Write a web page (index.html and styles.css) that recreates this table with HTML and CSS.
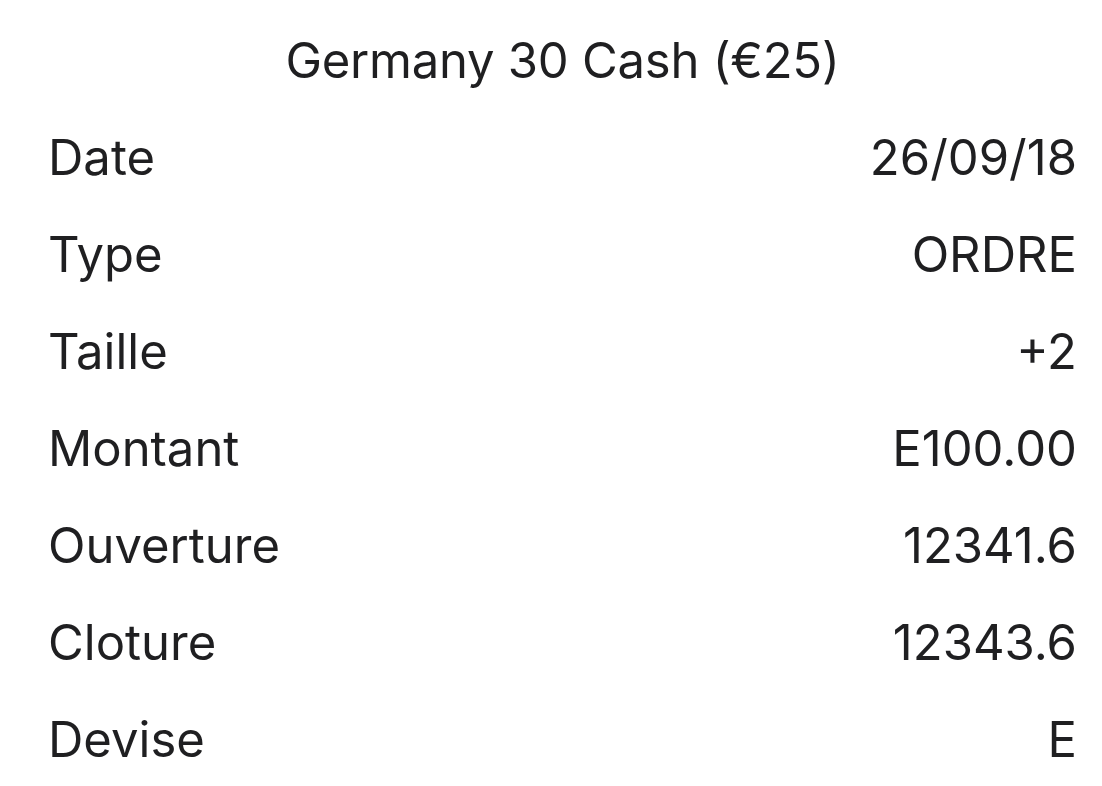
FILE: index.html
```html
<!DOCTYPE html>
<html lang="fr">
<head>
<meta charset="utf-8">
<title>Germany 30 Cash</title>
<link rel="stylesheet" href="styles.css">
</head>
<body>
<main class="sheet">
  <h1 class="title">Germany 30 Cash (€25)</h1>
  <ul class="rows">
    <li class="row"><span class="label">Date</span><span class="value">26/09/18</span></li>
    <li class="row"><span class="label">Type</span><span class="value">ORDRE</span></li>
    <li class="row"><span class="label">Taille</span><span class="value">+2</span></li>
    <li class="row"><span class="label">Montant</span><span class="value">E100.00</span></li>
    <li class="row"><span class="label">Ouverture</span><span class="value">12341.6</span></li>
    <li class="row"><span class="label">Cloture</span><span class="value">12343.6</span></li>
    <li class="row"><span class="label">Devise</span><span class="value">E</span></li>
  </ul>
</main>
</body>
</html>
```
FILE: styles.css
```css
html, body {
  margin: 0;
  padding: 0;
  background: #ffffff;
}
body {
  font-family: Inter, "Noto Sans", "Liberation Sans", sans-serif;
  color: #1f1f21;
  width: 1102px;
  height: 786px;
  overflow: hidden;
}
.sheet {
  padding: 12px 25px 0 48px;
}
.title {
  margin: 0;
  font-size: 49px;
  font-weight: 400;
  line-height: 97px;
  letter-spacing: -0.25px;
  text-align: center;
}
.rows {
  list-style: none;
  margin: 0;
  padding: 0;
}
.row {
  display: flex;
  justify-content: space-between;
  align-items: center;
  height: 97px;
  line-height: 97px;
  font-size: 49px;
}
```
